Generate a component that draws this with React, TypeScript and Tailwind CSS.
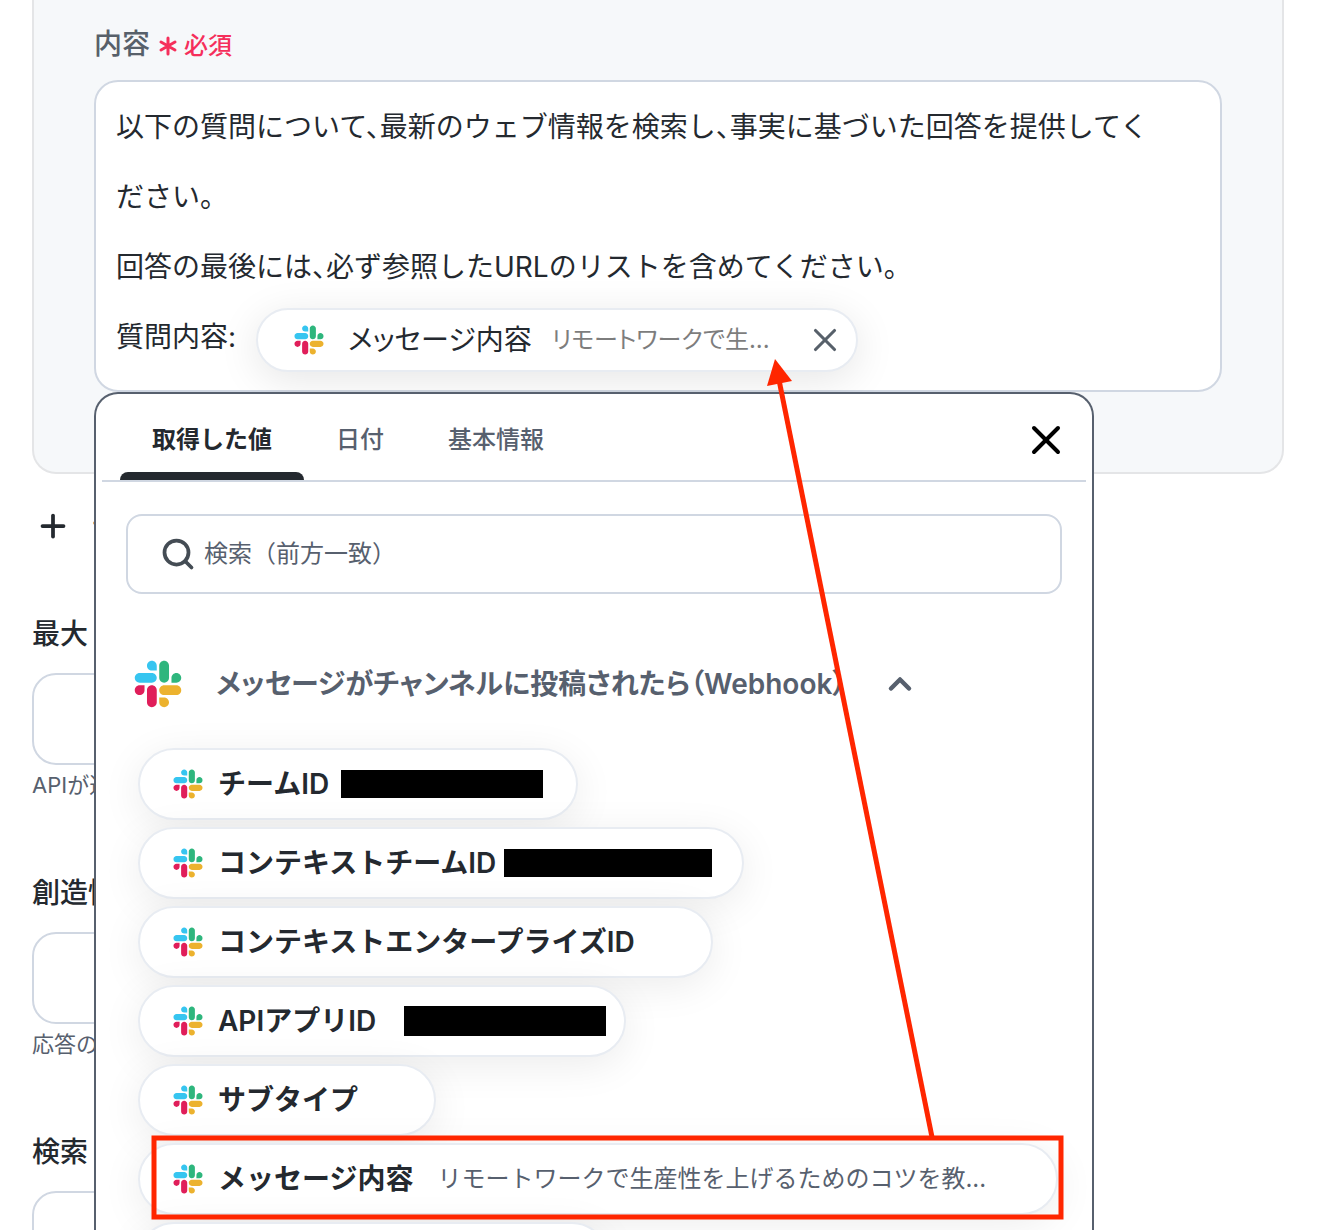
import { ChevronUp, Plus, Search, X } from 'lucide-react'

const SlackIcon = ({ className }: { className: string }) => (
    <svg viewBox="-2 -2 126.8 126.8" className={className} aria-hidden="true">
        <path fill="#E01E5A" d="M25.8 77.6c0 7.1-5.8 12.9-12.9 12.9S0 84.7 0 77.6s5.8-12.9 12.9-12.9h12.9v12.9zM32.3 77.6c0-7.1 5.8-12.9 12.9-12.9s12.9 5.8 12.9 12.9v32.3c0 7.1-5.8 12.9-12.9 12.9s-12.9-5.8-12.9-12.9V77.6z" />
        <path fill="#36C5F0" d="M45.2 25.8c-7.1 0-12.9-5.8-12.9-12.9S38.1 0 45.2 0s12.9 5.8 12.9 12.9v12.9H45.2zM45.2 32.3c7.1 0 12.9 5.8 12.9 12.9s-5.8 12.9-12.9 12.9H12.9C5.8 58.1 0 52.3 0 45.2s5.8-12.9 12.9-12.9h32.3z" />
        <path fill="#2EB67D" d="M97 45.2c0-7.1 5.8-12.9 12.9-12.9s12.9 5.8 12.9 12.9-5.8 12.9-12.9 12.9H97V45.2zM90.5 45.2c0 7.1-5.8 12.9-12.9 12.9s-12.9-5.8-12.9-12.9V12.9C64.7 5.8 70.5 0 77.6 0s12.9 5.8 12.9 12.9v32.3z" />
        <path fill="#ECB22E" d="M77.6 97c7.1 0 12.9 5.8 12.9 12.9s-5.8 12.9-12.9 12.9-12.9-5.8-12.9-12.9V97h12.9zM77.6 90.5c-7.1 0-12.9-5.8-12.9-12.9s5.8-12.9 12.9-12.9h32.3c7.1 0 12.9 5.8 12.9 12.9s-5.8 12.9-12.9 12.9H77.6z" />
    </svg>
)

const tabs = ['取得した値', '日付', '基本情報']

const outputs = [
    { name: 'チームID', width: 'w-[440px]', mask: 'ml-3 h-7 w-[202px]' },
    { name: 'コンテキストチームID', width: 'w-[606px]', mask: 'ml-2 h-7 w-[208px]' },
    { name: 'コンテキストエンタープライズID', width: 'w-[575px]' },
    { name: 'APIアプリID', width: 'w-[488px]', mask: 'ml-7 h-[30px] w-[202px]' },
    { name: 'サブタイプ', width: 'w-[298px]' },
    { name: 'メッセージ内容', width: 'w-[920px]', value: 'リモートワークで生産性を上げるためのコツを教...' },
    { name: 'ユーザーID', width: 'w-[470px]' },
]

const fields = [
    { id: 'max', label: '最大トークン', help: 'APIが返す' },
    { id: 'creativity', label: '創造性', help: '応答の幅' },
    { id: 'search', label: '検索 件数', help: '' },
]

const Editor = () => (
    <div
        role="textbox"
        aria-labelledby="content-label"
        aria-multiline="true"
        tabIndex={0}
        className="rounded-3xl border-2 border-[#d0d7e2] bg-white pt-[10px] pr-14 pb-[18px] pl-5 text-[28px] leading-[70px] text-[#24292f] [font-feature-settings:'halt']"
    >
        <p>以下の質問について、最新のウェブ情報を検索し、事実に基づいた回答を提供してください。</p>
        <p>回答の最後には、必ず参照したURLのリストを含めてください。</p>
        <div className="flex h-[70px] items-end gap-5">
            <span>質問内容:</span>
            <span className="flex h-16 w-[602px] items-center rounded-full border-2 border-[#e8ecf2] bg-white pr-5 pl-9 leading-10 shadow-[0_8px_40px_rgba(0,0,0,0.1)] [font-feature-settings:'palt']">
                <SlackIcon className="size-[30px] shrink-0" />
                <span className="ml-6">メッセージ内容</span>
                <span className="ml-5 text-2xl text-[#7d7d7d]">リモートワークで生...</span>
                <button type="button" aria-label="削除" className="ml-auto text-[#57606a]">
                    <X className="size-[38px] -my-1 -mr-2" strokeWidth={2} />
                </button>
            </span>
        </div>
    </div>
)

const ValuePicker = () => (
    <div className="absolute top-full left-0 z-10 w-[1000px] max-w-full rounded-t-3xl border-2 border-b-0 border-[#57606e] bg-white pb-10">
        <div className="mx-1.5 flex items-center border-b-2 border-[#d0d7e2] pt-1.5 pl-[18px]">
            <div role="tablist" className="flex">
                {tabs.map((tab, i) => (
                    <button
                        key={tab}
                        type="button"
                        role="tab"
                        aria-selected={i === 0}
                        className={`relative h-20 px-8 text-2xl ${i === 0 ? 'font-semibold text-[#24292f]' : 'font-medium text-[#57606e]'}`}
                    >
                        {tab}
                        {i === 0 && <span className="absolute inset-x-0 bottom-0 h-2 rounded-t-lg bg-[#24292f]" />}
                    </button>
                ))}
            </div>
            <button type="button" aria-label="閉じる" className="mr-4 ml-auto text-black">
                <X className="size-12" strokeWidth={2} />
            </button>
        </div>

        <div className="px-[30px] pt-8">
            <label className="flex h-20 items-center gap-2 rounded-2xl border-2 border-[#d0d7e2] px-8 text-[#57606e]">
                <Search className="size-9 shrink-0 text-[#444c54]" strokeWidth={2.5} />
                <input type="text" aria-label="検索" placeholder="検索（前方一致）" className="w-full text-2xl outline-none placeholder:text-[#57606e]" />
            </label>

            <button type="button" className="mt-[66px] ml-2 flex h-12 items-center text-[28px] font-semibold text-[#57606e]">
                <SlackIcon className="size-12 shrink-0" />
                <span className="ml-[34px] [font-feature-settings:'palt']">メッセージがチャンネルに投稿されたら（Webhook）</span>
                <ChevronUp className="ml-9 size-9" strokeWidth={3} />
            </button>

            <ul className="mt-10 ml-3 flex flex-col gap-[7px]">
                {outputs.map((output) => (
                    <li key={output.name}>
                        <button
                            type="button"
                            className={`flex h-[72px] items-center rounded-full border-2 border-[#e8ecf2] bg-white pl-[33px] text-left whitespace-nowrap text-[#24292f] shadow-[0_8px_40px_rgba(0,0,0,0.08)] ${output.width}`}
                        >
                            <SlackIcon className="size-[30px] shrink-0" />
                            <span className="ml-[15px] text-[28px] font-semibold">{output.name}</span>
                            {output.value && <span className="ml-6 text-2xl text-[#57606e]">{output.value}</span>}
                            {output.mask && <span className={`bg-black ${output.mask}`} />}
                        </button>
                    </li>
                ))}
            </ul>
        </div>
    </div>
)

const App = () => (
    <main
        lang="ja"
        className="relative h-screen overflow-hidden bg-white pr-[34px] pl-8 font-['Inter','Noto_Sans_CJK_JP',sans-serif] text-[#24292f]"
    >
        <section className="rounded-b-3xl border-2 border-t-0 border-[#e4e5e7] bg-[#f6f8fa] px-[60px] pt-5 pb-20">
            <div className="mb-3 flex h-12 items-center">
                <span id="content-label" className="text-[28px] font-medium text-[#57606a]">内容</span>
                <span className="ml-2 flex items-center gap-[6px] pt-1 text-2xl font-medium text-[#f52f5b]">
                    <svg viewBox="0 0 20 20" className="size-5" fill="none" stroke="currentColor" strokeWidth="3" strokeLinecap="round" aria-hidden="true">
                        <path d="M10 2v16M3 6l14 8M17 6L3 14" />
                    </svg>
                    必須
                </span>
            </div>
            <div className="relative">
                <Editor />
                <ValuePicker />
            </div>
        </section>

        <button type="button" className="mt-7 ml-[3px] flex h-12 items-center gap-5 text-[28px]">
            <Plus className="size-9" strokeWidth={2.5} />
            テキスト
        </button>

        <div className="mt-[63px] flex w-[640px] flex-col gap-[67px]">
            {fields.map((field) => (
                <div key={field.id}>
                    <label htmlFor={field.id} className="block text-[28px] leading-[42px] font-medium">{field.label}</label>
                    <input id={field.id} type="text" className="mt-[18px] block h-[92px] w-full rounded-3xl border-2 border-[#d0d7e2] px-5 text-[28px]" />
                    <p className="text-[22px] leading-10 text-[#57606e]">{field.help}</p>
                </div>
            ))}
        </div>

        {/* annotation from the picked value to the inserted chip */}
        <svg viewBox="0 0 1318 1230" className="pointer-events-none absolute top-0 left-0 z-20 h-[1230px] w-[1318px]" fill="none" aria-hidden="true">
            <rect x="154" y="1138" width="907" height="79" stroke="#ff2600" strokeWidth="5" />
            <path d="M932 1137L779 380" stroke="#ff2600" strokeWidth="5" />
            <path d="M775 359l17 22-25 5z" fill="#ff2600" />
        </svg>
    </main>
)

export default App
